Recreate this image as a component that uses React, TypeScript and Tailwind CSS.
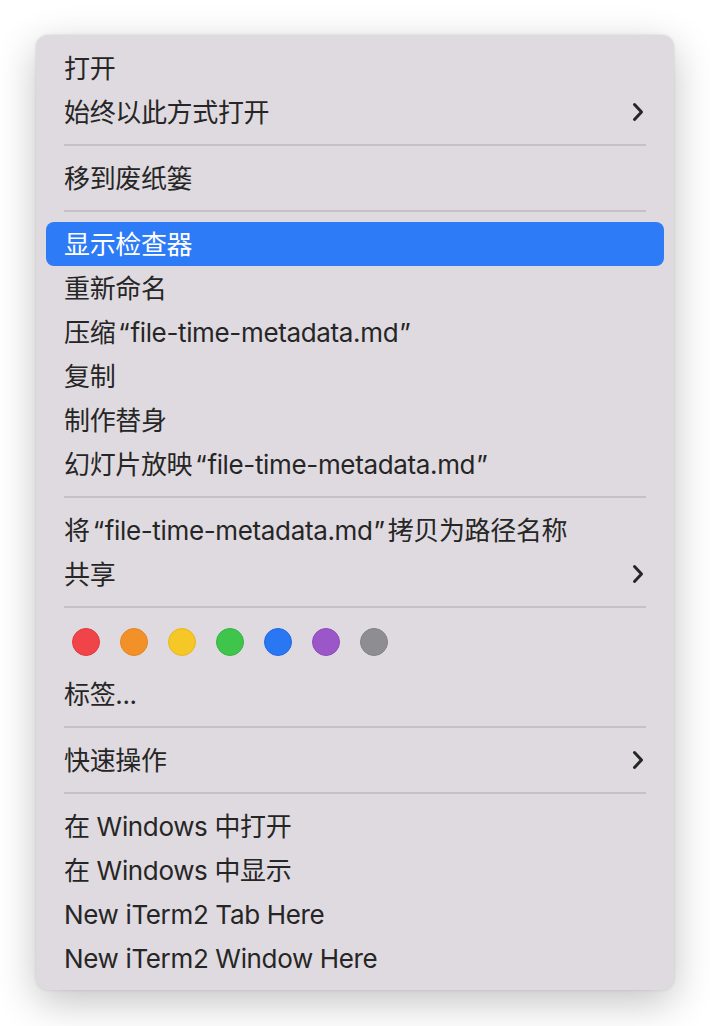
import React from 'react'

type Item =
  | { type: 'item'; label: string; submenu?: boolean; active?: boolean }
  | { type: 'sep' }
  | { type: 'tags' }

const items: Item[] = [
  { type: 'item', label: '打开' },
  { type: 'item', label: '始终以此方式打开', submenu: true },
  { type: 'sep' },
  { type: 'item', label: '移到废纸篓' },
  { type: 'sep' },
  { type: 'item', label: '显示检查器', active: true },
  { type: 'item', label: '重新命名' },
  { type: 'item', label: '压缩“file-time-metadata.md”' },
  { type: 'item', label: '复制' },
  { type: 'item', label: '制作替身' },
  { type: 'item', label: '幻灯片放映“file-time-metadata.md”' },
  { type: 'sep' },
  { type: 'item', label: '将“file-time-metadata.md”拷贝为路径名称' },
  { type: 'item', label: '共享', submenu: true },
  { type: 'sep' },
  { type: 'tags' },
  { type: 'item', label: '标签...' },
  { type: 'sep' },
  { type: 'item', label: '快速操作', submenu: true },
  { type: 'sep' },
  { type: 'item', label: '在 Windows 中打开' },
  { type: 'item', label: '在 Windows 中显示' },
  { type: 'item', label: 'New iTerm2 Tab Here' },
  { type: 'item', label: 'New iTerm2 Window Here' },
]

const tagColors = [
  'bg-[#f04448] border-[#e03a3e]',
  'bg-[#f29128] border-[#e4851f]',
  'bg-[#f5c727] border-[#e8b81c]',
  'bg-[#3fc44c] border-[#33b540]',
  'bg-[#2a77f4] border-[#1f6ae6]',
  'bg-[#9b57c8] border-[#8e4bbb]',
  'bg-[#8e8d91] border-[#838286]',
]

const Chevron = () => (
  <svg width="12" height="20" viewBox="0 0 12 20" fill="none">
    <path d="M2.5 2.5 L9.5 10 L2.5 17.5" stroke="#262626" strokeWidth="3" strokeLinecap="round" strokeLinejoin="round" />
  </svg>
)

// quotes get a bit of extra room, like the CJK curly quotes in the system font
const renderLabel = (label: string) =>
  label.split(/([“”])/).map((part, i) =>
    part === '“' ? (
      <span key={i} className="ml-[3px] mr-[1px]">“</span>
    ) : part === '”' ? (
      <span key={i} className="ml-[1px] mr-[3px]">”</span>
    ) : (
      <React.Fragment key={i}>{part}</React.Fragment>
    ),
  )

export default function App() {
  return (
    <div className="min-h-[1026px] w-[710px] bg-white pt-[35px] pl-[36px]">
      <div
        className="w-[638px] rounded-[12px] bg-[#dfdadf] pt-[11px] pb-[10px] shadow-[0_12px_40px_rgba(0,0,0,0.24),0_0_3px_rgba(0,0,0,0.12)]"
        style={{ fontFamily: 'Inter, "Noto Sans CJK SC", sans-serif' }}
      >
        {items.map((it, i) => {
          if (it.type === 'sep') {
            return (
              <div key={i} className="flex h-[22px] items-center px-[28px]">
                <div className="h-[2px] w-full bg-[#c6c1c6]" />
              </div>
            )
          }
          if (it.type === 'tags') {
            return (
              <div key={i} className="flex h-[54px] gap-[20px] px-[36px] pt-[10px]">
                {tagColors.map((c) => (
                  <div key={c} className={`h-[28px] w-[28px] rounded-full border ${c}`} />
                ))}
              </div>
            )
          }
          return (
            <div
              key={i}
              className={`mx-[10px] flex h-[44px] items-center justify-between rounded-[8px] pl-[18px] pr-[20px] text-[26px] leading-none tracking-[-0.35px] ${
                it.active ? 'bg-[#2d7bf6] text-white' : 'text-[#262626]'
              }`}
            >
              <span className="pt-[2px]">{renderLabel(it.label)}</span>
              {it.submenu && <Chevron />}
            </div>
          )
        })}
      </div>
    </div>
  )
}
